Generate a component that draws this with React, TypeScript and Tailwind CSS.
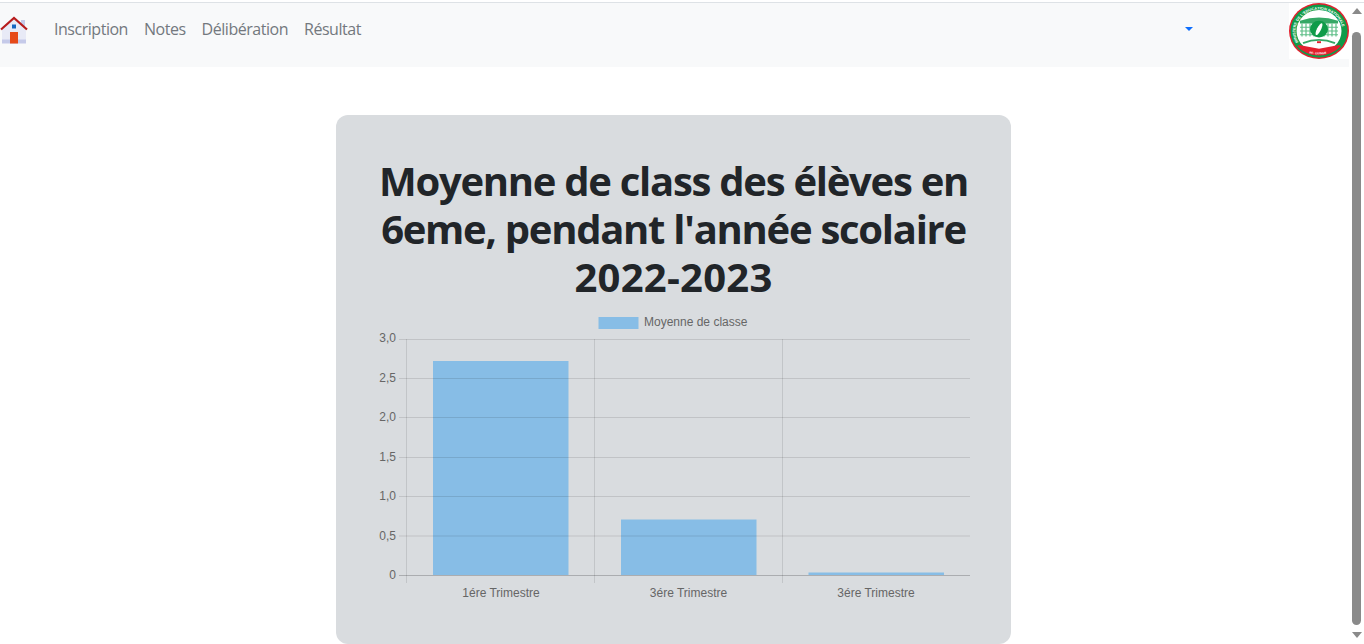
// App.tsx
import React from "react";

const NAV_ITEMS = ["Inscription", "Notes", "Délibération", "Résultat"];
const Y_TICKS = [
  { label: "3,0", y: 339.5, ty: 342 },
  { label: "2,5", y: 378.5, ty: 382 },
  { label: "2,0", y: 417.5, ty: 421 },
  { label: "1,5", y: 457.5, ty: 461 },
  { label: "1,0", y: 496.5, ty: 500 },
  { label: "0,5", y: 536, ty: 539.5 },
  { label: "0", y: 575.5, ty: 579 },
];
const BARS = [
  { label: "1ére Trimestre", x: 433, top: 361, cx: 501 },
  { label: "3ére Trimestre", x: 621, top: 519.5, cx: 688.5 },
  { label: "3ére Trimestre", x: 808.5, top: 572.5, cx: 876 },
];

function HomeIcon() {
  return (
    <svg width="28" height="28" viewBox="0 0 28 28" className="block">
      <rect x="21" y="4" width="4" height="8" fill="#c5cae9" />
      <path d="M2 27V13L14 3l12 10v14z" fill="#e8eaf6" />
      <rect x="2" y="23.500" width="24" height="4" fill="#c5cae9" />
      <path d="M1 13.500 14 2l13 11.500" fill="none" stroke="#b71c1c" strokeWidth="2.200" />
      <rect x="10" y="16" width="8" height="11.500" fill="#e64a19" />
      <rect x="12" y="8.500" width="4" height="4" fill="#1565c0" />
    </svg>
  );
}

function Logo() {
  return (
    <svg width="60" height="56" viewBox="0 0 60 60" preserveAspectRatio="none" className="block bg-white">
      <defs>
        <path id="logo-arc" d="M9.500 42A23.500 23.500 0 1 1 50.500 42" />
        <path id="logo-arc-low" d="M15 52Q30 58 45 52" />
      </defs>
      <circle cx="30" cy="30" r="30" fill="#e3202e" />
      <circle cx="30" cy="30" r="28.500" fill="#0f9b49" />
      <circle cx="30" cy="30" r="22.500" fill="#ffffff" />
      {/* bottom band, with the two wedges on its ends */}
      <path d="M10 45 30 49 50 45 52 46A28.500 28.500 0 0 1 8 46z" fill="#e3202e" />
      <text fontFamily="Liberation Sans" fontSize="4" fontWeight="700" fill="#ffffff">
        <textPath href="#logo-arc">MINISTERE DE L'EDUCATION NATIONALE</textPath>
      </text>
      <text fontFamily="Liberation Sans" fontSize="3" fontWeight="700" fill="#ffffff">
        <textPath href="#logo-arc-low" startOffset="18%">RE. GUINEE</textPath>
      </text>
      <path d="M11 19Q30 12 49 19v3H11z" fill="#35a865" />
      <g fill="none" stroke="#5fbf88" strokeWidth="1.200">
        <path d="M11 26h38M11 30h38M11 34h38" />
        <path d="M13 22v14M17 22v14M21 22v14M25 22v14M35 22v14M39 22v14M43 22v14M47 22v14" />
      </g>
      <path d="M14 43Q30 36 46 43" fill="none" stroke="#35a865" strokeWidth="2" />
      <circle cx="30" cy="28" r="9" fill="#0f9b49" />
      <ellipse cx="30" cy="28" rx="2" ry="7" fill="#ffffff" transform="rotate(25 30 28)" />
      <rect x="28" y="41" width="4" height="2" fill="#e3202e" />
    </svg>
  );
}

function Chart() {
  // page coordinates, the viewBox origin is the chart's corner on the page
  return (
    <svg width="675" height="334" viewBox="336 310 675 334" className="block">
      <rect x="598.500" y="317" width="40" height="12" fill="#87bde6" />
      <text x="644" y="326" fontFamily="Liberation Sans" fontSize="12" fill="#666666">
        Moyenne de classe
      </text>
      {BARS.map((b) => (
        <rect key={b.x} x={b.x} y={b.top} width="135.500" height={575 - b.top} fill="#87bde6" />
      ))}
      {Y_TICKS.map((t) => (
        <g key={t.label}>
          <line x1="399" x2="970" y1={t.y} y2={t.y} stroke="rgba(0,0,0,0.11)" />
          <text x="396" y={t.ty} textAnchor="end" fontFamily="Liberation Sans" fontSize="12" fill="#666666">
            {t.label}
          </text>
        </g>
      ))}
      <line x1="399" x2="970" y1="575.500" y2="575.500" stroke="rgba(0,0,0,0.11)" />
      {[406.5, 594.5, 782.5].map((x) => (
        <line key={x} x1={x} x2={x} y1="339" y2="583" stroke="rgba(0,0,0,0.1)" />
      ))}
      {BARS.map((b) => (
        <text key={b.x} x={b.cx} y="597" textAnchor="middle" fontFamily="Liberation Sans" fontSize="12" fill="#666666">
          {b.label}
        </text>
      ))}
    </svg>
  );
}

function Scrollbar() {
  return (
    <div className="flex h-full w-[15px] shrink-0 flex-col items-center bg-white pt-[5px]">
      <div className="h-0 w-0 border-x-[5px] border-b-[6px] border-x-transparent border-b-[#8a8a8a]" />
      <div className="mt-[18px] h-[593px] w-[9px] rounded-[5px] bg-[#8a8a8a]" />
      <div className="mt-[7px] h-0 w-0 border-x-[5px] border-t-[6px] border-x-transparent border-t-[#8a8a8a]" />
    </div>
  );
}

export default function App() {
  return (
    <div className="flex h-[644px] w-full flex-col overflow-hidden bg-white font-['Open_Sans',sans-serif] text-[#212529]">
      <div className="mt-[2px] h-px w-full shrink-0 bg-[#dee2e6]" />
      <div className="flex min-h-0 flex-1">
        <div className="min-w-0 flex-1">
          {/* Navbar */}
          <nav className="flex h-[64px] items-start bg-[#f8f9fa]">
            <div className="mt-[13px]">
              <HomeIcon />
            </div>
            <ul className="ml-[26px] mt-[14px] flex gap-[16px] text-[16px] leading-[24px] tracking-[-0.47px] text-[#73787e]">
              {NAV_ITEMS.map((item) => (
                <li key={item}>{item}</li>
              ))}
            </ul>
            <div className="ml-auto mr-[96px] mt-[24px] h-0 w-0 border-x-[4.500px] border-t-[4.500px] border-x-transparent border-t-[#0d6efd]" />
            <Logo />
          </nav>

          {/* Card */}
          <main className="mt-[48px] flex justify-center">
            <section className="ml-[-2px] w-[675px] rounded-[12px] bg-[#d9dcdf] pt-[42px]">
              <h1 className="px-[24px] text-center text-[40px] font-bold leading-[48px] tracking-[-1.27px]">
                Moyenne de class des élèves en 6eme, pendant l'année scolaire{" "}
                <span className="tracking-[0.25px]">2022-2023</span>
              </h1>
              <div className="mt-[9px]">
                <Chart />
              </div>
            </section>
          </main>
        </div>
        <Scrollbar />
      </div>
    </div>
  );
}
